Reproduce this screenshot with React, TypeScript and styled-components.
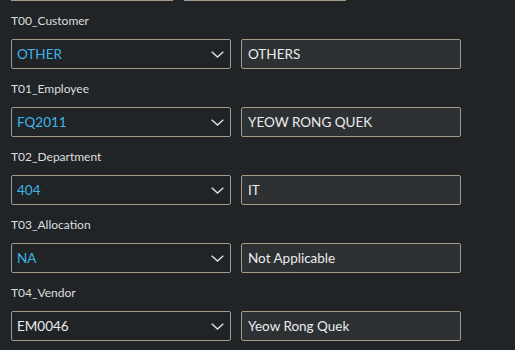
import React from 'react';
import styled, { createGlobalStyle } from 'styled-components';

const Global = createGlobalStyle`
  html, body {
    margin: 0;
    padding: 0;
    background: #212427;
  }
  body {
    font-family: Lato, "Noto Sans", sans-serif;
  }
`;

const Page = styled.div`
  width: 515px;
  height: 350px;
  overflow: hidden;
  background: #212427;
  padding-left: 11px;
  box-sizing: border-box;
`;

const ClippedRow = styled.div`
  display: flex;
  gap: 11px;
  margin-bottom: 12px;
`;

const ClippedBox = styled.div`
  width: 162px;
  height: 0;
  border-bottom: 1px solid #a59a89;
`;

const Field = styled.div`
  display: flex;
  flex-direction: column;
  margin-bottom: 12px;
`;

const Label = styled.div`
  color: #dedede;
  font-size: 12px;
  line-height: 16px;
  margin-bottom: 10px;
`;

const Controls = styled.div`
  display: flex;
  gap: 10px;
`;

const SelectWrap = styled.div`
  position: relative;
  width: 220px;
  height: 30px;
`;

const Select = styled.select<{ $accent: boolean }>`
  appearance: none;
  width: 100%;
  height: 100%;
  box-sizing: border-box;
  margin: 0;
  padding: 0 28px 0 5px;
  background: #212427;
  border: 1px solid #a59a89;
  border-radius: 2px;
  color: ${(p) => (p.$accent ? '#3db5e6' : '#ececec')};
  font-family: Lato, "Noto Sans", sans-serif;
  font-size: 13.5px;
  outline: none;
`;

const Chevron = styled.svg`
  position: absolute;
  right: 7px;
  top: 12px;
  pointer-events: none;
`;

const TextInput = styled.input`
  width: 220px;
  height: 30px;
  box-sizing: border-box;
  margin: 0;
  padding: 0 6px;
  background: #2d3134;
  border: 1px solid #a59a89;
  border-radius: 2px;
  color: #ececec;
  font-family: Lato, "Noto Sans", sans-serif;
  font-size: 13.5px;
  outline: none;
`;

const rows = [
  { label: 'T00_Customer', code: 'OTHER', name: 'OTHERS', accent: true },
  { label: 'T01_Employee', code: 'FQ2011', name: 'YEOW RONG QUEK', accent: true },
  { label: 'T02_Department', code: '404', name: 'IT', accent: true },
  { label: 'T03_Allocation', code: 'NA', name: 'Not Applicable', accent: true },
  { label: 'T04_Vendor', code: 'EM0046', name: 'Yeow Rong Quek', accent: false },
];

export default function App() {
  return (
    <Page>
      <Global />
      <ClippedRow>
        <ClippedBox />
        <ClippedBox />
      </ClippedRow>
      {rows.map((r) => (
        <Field key={r.label}>
          <Label>{r.label}</Label>
          <Controls>
            <SelectWrap>
              <Select $accent={r.accent} value={r.code} onChange={() => {}}>
                <option value={r.code}>{r.code}</option>
              </Select>
              <Chevron width="13" height="7" viewBox="0 0 13 7">
                <path d="M0.7 0.7 L6.5 6 L12.3 0.7" fill="none" stroke="#e6e6e6" strokeWidth="1.3" />
              </Chevron>
            </SelectWrap>
            <TextInput readOnly value={r.name} />
          </Controls>
        </Field>
      ))}
    </Page>
  );
}
